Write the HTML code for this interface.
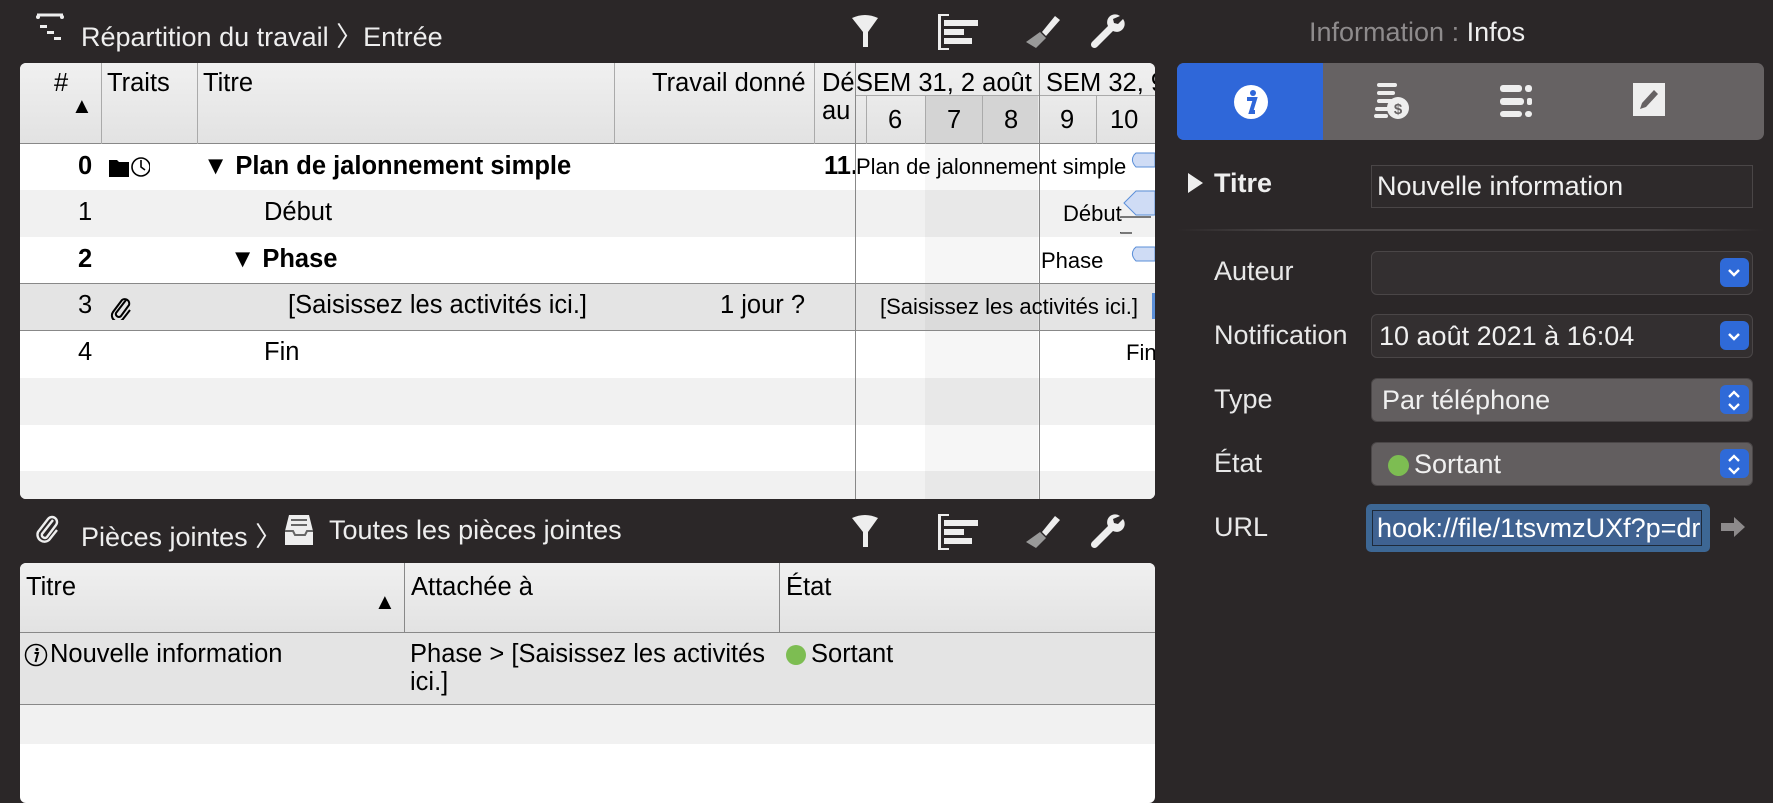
<!DOCTYPE html>
<html><head><meta charset="utf-8"><style>
*{box-sizing:border-box;margin:0;padding:0}
body{width:1773px;height:786px;background:#2b2728;font-family:"Liberation Sans",sans-serif;position:relative;overflow:hidden;color:#000}
.a{position:absolute}
.t{color:#eee;font-size:27px;white-space:nowrap}
.cell{position:absolute;font-size:25.5px;white-space:nowrap}
.g{font-size:22px}
.vl{position:absolute;width:1px;background:#aaa}
.hl{position:absolute;height:1px;background:#999}
.lbl{position:absolute;left:1214px;color:#e8e8e8;font-size:27px}
.pop{position:absolute;left:1371px;width:382px;border:1px solid #4a4647;border-radius:6px;color:#f0f0f0;font-size:27px;padding-left:10px}
.btn{position:absolute;right:3px;top:6px;width:29px;height:29px;background:#2f6ad8;border-radius:6px}
</style></head><body>

<!-- top title -->
<svg class="a" style="left:35px;top:12px" width="32" height="30" viewBox="0 0 32 30"><path d="M2 3h26" stroke="#eee" stroke-width="3"/><circle cx="3" cy="5" r="2" fill="#eee"/><circle cx="27" cy="5" r="2" fill="#eee"/><rect x="5" y="13" width="7" height="3" fill="#eee"/><rect x="12" y="19" width="7" height="3" fill="#eee"/><rect x="19" y="25" width="7" height="3" fill="#eee"/></svg>
<div class="a t" style="left:81px;top:15px">Répartition du travail 〉Entrée</div>

<!-- toolbar icons -->
<svg class="a" style="left:850px;top:12px" width="280" height="40" viewBox="0 0 280 40">
 <g fill="#eee">
  <path d="M2 6 Q15 0 28 6 L18 20 L18 35 L13 35 L13 20 Z"/>
  <path d="M88 2h3v36h-3zM91 2h8v2h-8zM91 36h8v2h-8z"/><rect x="94" y="8" width="34" height="6"/><rect x="94" y="17" width="20" height="6"/><rect x="94" y="26" width="28" height="6"/>
  <path d="M205 4 l5 4 -14 16 -4 -4z"/><path d="M190 20 l6 6 -10 10 -10 -6z" fill="#999"/>
  <path d="M270 4 a8 8 0 0 0 -12 10 l-16 16 a3 3 0 0 0 5 5 l16 -16 a8 8 0 0 0 10 -12 l-5 5 -4 -1 -1 -4z"/>
 </g>
</svg>

<!-- top table -->
<div class="a" style="left:20px;top:63px;width:1135px;height:436px;background:#fff;border-radius:6px;overflow:hidden">
 <div class="a" style="left:0;top:0;width:1135px;height:81px;background:linear-gradient(#f0f0f0,#e2e2e2)"></div>
 <div class="a" style="left:0;top:127px;width:1135px;height:47px;background:#f1f1f1"></div>
 <div class="a" style="left:0;top:221px;width:1135px;height:47px;background:#e4e4e4"></div>
 <div class="a" style="left:0;top:315px;width:1135px;height:47px;background:#f1f1f1"></div>
 <div class="a" style="left:0;top:408px;width:1135px;height:47px;background:#f1f1f1"></div>
 <div class="a" style="left:905px;top:81px;width:113px;height:355px;background:rgba(0,0,0,0.035)"></div>
 <div class="a" style="left:905px;top:32px;width:113px;height:49px;background:#d4d4d4"></div>
 <div class="hl" style="left:0;top:80px;width:1135px;background:#888"></div>
 <div class="hl" style="left:835px;top:32px;width:300px;background:#aaa"></div>
 <div class="hl" style="left:0;top:220px;width:1135px;background:#888"></div>
 <div class="hl" style="left:0;top:267px;width:1135px;background:#888"></div>
 <div class="vl" style="left:81px;top:0;height:81px"></div>
 <div class="vl" style="left:177px;top:0;height:81px"></div>
 <div class="vl" style="left:594px;top:0;height:81px"></div>
 <div class="vl" style="left:794px;top:0;height:81px"></div>
 <div class="vl" style="left:835px;top:0;height:436px;background:#888"></div>
 <div class="vl" style="left:846px;top:32px;height:49px"></div>
 <div class="vl" style="left:905px;top:32px;height:49px"></div>
 <div class="vl" style="left:962px;top:32px;height:49px"></div>
 <div class="vl" style="left:1019px;top:0;height:436px;background:#888"></div>
 <div class="vl" style="left:1076px;top:32px;height:49px"></div>
 <div class="cell" style="left:34px;top:6px">#</div>
 <div class="cell" style="left:51px;top:30px;font-size:22px">▲</div>
 <div class="cell" style="left:87px;top:6px">Traits</div>
 <div class="cell" style="left:183px;top:6px">Titre</div>
 <div class="cell" style="left:632px;top:6px">Travail donné</div>
 <div class="cell" style="left:802px;top:6px;width:33px;overflow:hidden">Dé</div>
 <div class="cell" style="left:802px;top:34px">au</div>
 <div class="cell" style="left:836px;top:6px">SEM 31, 2 août</div>
 <div class="cell" style="left:1026px;top:6px">SEM 32, 9</div>
 <div class="cell" style="left:868px;top:43px">6</div>
 <div class="cell" style="left:927px;top:43px">7</div>
 <div class="cell" style="left:984px;top:43px">8</div>
 <div class="cell" style="left:1040px;top:43px">9</div>
 <div class="cell" style="left:1090px;top:43px">10</div>

 <div class="cell" style="left:58px;top:89px;font-weight:bold">0</div>
 <svg class="a" style="left:88px;top:92px" width="42" height="24"><path d="M1 5h8l2 2h10v15H1z" fill="#000"/><circle cx="33" cy="12" r="9" fill="none" stroke="#000" stroke-width="1.6"/><path d="M33 5v7l4 3" stroke="#000" stroke-width="1.6" fill="none"/></svg>
 <div class="cell" style="left:183px;top:89px;font-weight:bold">▼ Plan de jalonnement simple</div>
 <div class="cell" style="left:804px;top:89px;font-weight:bold;width:31px;overflow:hidden">11.0</div>
 <div class="cell g" style="left:836px;top:91px">Plan de jalonnement simple</div>
 <div class="cell" style="left:58px;top:135px">1</div>
 <div class="cell" style="left:244px;top:135px">Début</div>
 <div class="cell g" style="left:1043px;top:138px">Début</div>
 <div class="cell" style="left:58px;top:182px;font-weight:bold">2</div>
 <div class="cell" style="left:210px;top:182px;font-weight:bold">▼ Phase</div>
 <div class="cell g" style="left:1021px;top:185px">Phase</div>
 <div class="cell" style="left:58px;top:228px">3</div>
 <svg class="a" style="left:90px;top:233px" width="22" height="24"><path d="M16 4 L6 17 a3 3 0 0 0 5 3 L19 9 a4.5 4.5 0 0 0 -7 -5 L3 16 a6 6 0 0 0 10 7 L20 14" stroke="#000" stroke-width="2" fill="none"/></svg>
 <div class="cell" style="left:268px;top:228px">[Saisissez les activités ici.]</div>
 <div class="cell" style="left:700px;top:228px">1 jour ?</div>
 <div class="cell g" style="left:860px;top:231px">[Saisissez les activités ici.]</div>
 <div class="cell" style="left:58px;top:275px">4</div>
 <div class="cell" style="left:244px;top:275px">Fin</div>
 <div class="cell g" style="left:1106px;top:277px">Fin</div>
 <svg class="a" style="left:1100px;top:84px" width="35" height="140"><path d="M14 8 q-4 6 2 12 l19 0 0-14 -19 0z" fill="#cfdcf5" stroke="#5b8fd8"/><path d="M4 56 l12 -12 19 0 0 24 -19 0z" fill="#cfdcf5" stroke="#5b8fd8"/><path d="M-2 74 q0 -4 3 -4 h30 M-2 74 v8 q0 4 4 4 h10" stroke="#000" fill="none"/><path d="M14 102 q-4 6 2 12 l19 0 0-14 -19 0z" fill="#cfdcf5" stroke="#5b8fd8"/><path d="M18 226 v20" stroke="#5b8fd8" stroke-width="4"/></svg>
 <div class="a" style="left:1132px;top:230px;width:3px;height:26px;background:#5b8fd8"></div>
</div>

<!-- bottom title -->
<svg class="a" style="left:35px;top:514px" width="26" height="30"><path d="M18 6 L7 20 a3 3 0 0 0 5 3 L21 11 a5 5 0 0 0 -8 -6 L3 18 a7 7 0 0 0 11 8 L22 16" stroke="#eee" stroke-width="2.4" fill="none"/></svg>
<div class="a t" style="left:81px;top:515px">Pièces jointes 〉</div>
<svg class="a" style="left:283px;top:513px" width="34" height="34"><path d="M6 2h20l4 16v14H2V18z" fill="#eee"/><rect x="8" y="6" width="16" height="2" fill="#666"/><rect x="8" y="11" width="16" height="2" fill="#666"/><path d="M2 18h8l2 4h10l2-4h6" stroke="#666" fill="none" stroke-width="2"/></svg>
<div class="a t" style="left:329px;top:515px">Toutes les pièces jointes</div>
<svg class="a" style="left:850px;top:512px" width="280" height="40" viewBox="0 0 280 40">
 <g fill="#eee">
  <path d="M2 6 Q15 0 28 6 L18 20 L18 35 L13 35 L13 20 Z"/>
  <path d="M88 2h3v36h-3zM91 2h8v2h-8zM91 36h8v2h-8z"/><rect x="94" y="8" width="34" height="6"/><rect x="94" y="17" width="20" height="6"/><rect x="94" y="26" width="28" height="6"/>
  <path d="M205 4 l5 4 -14 16 -4 -4z"/><path d="M190 20 l6 6 -10 10 -10 -6z" fill="#999"/>
  <path d="M270 4 a8 8 0 0 0 -12 10 l-16 16 a3 3 0 0 0 5 5 l16 -16 a8 8 0 0 0 10 -12 l-5 5 -4 -1 -1 -4z"/>
 </g>
</svg>

<!-- bottom table -->
<div class="a" style="left:20px;top:563px;width:1135px;height:240px;background:#fff;border-radius:6px;overflow:hidden">
 <div class="a" style="left:0;top:0;width:1135px;height:70px;background:linear-gradient(#f0f0f0,#e2e2e2)"></div>
 <div class="a" style="left:0;top:70px;width:1135px;height:72px;background:#e4e4e4"></div>
 <div class="a" style="left:0;top:142px;width:1135px;height:39px;background:#f1f1f1"></div>
 <div class="hl" style="left:0;top:69px;width:1135px;background:#888"></div>
 <div class="hl" style="left:0;top:141px;width:1135px;background:#888"></div>
 <div class="vl" style="left:384px;top:0;height:70px;background:#888"></div>
 <div class="vl" style="left:759px;top:0;height:70px;background:#888"></div>
 <div class="cell" style="left:6px;top:10px">Titre</div>
 <div class="cell" style="left:354px;top:26px;font-size:22px">▲</div>
 <div class="cell" style="left:391px;top:10px">Attachée à</div>
 <div class="cell" style="left:766px;top:10px">État</div>
 <svg class="a" style="left:4px;top:80px" width="24" height="24"><circle cx="12" cy="12" r="10.5" fill="none" stroke="#000" stroke-width="1.5"/><circle cx="13" cy="6.5" r="1.6"/><path d="M10.5 10h3.5l-2.5 9" stroke="#000" stroke-width="2" fill="none"/></svg>
 <div class="cell" style="left:30px;top:77px">Nouvelle information</div>
 <div class="cell" style="left:390px;top:77px">Phase &gt; [Saisissez les activités</div>
 <div class="cell" style="left:390px;top:105px">ici.]</div>
 <div class="a" style="left:766px;top:82px;width:20px;height:20px;border-radius:50%;background:#7dbd52"></div>
 <div class="cell" style="left:791px;top:77px">Sortant</div>
</div>

<!-- right panel -->
<div class="a" style="left:1309px;top:17px;font-size:27px;color:#8e8b8c;white-space:nowrap">Information : <span style="color:#eee">Infos</span></div>
<div class="a" style="left:1177px;top:63px;width:587px;height:77px;background:#666263;border-radius:7px;overflow:hidden">
 <div class="a" style="left:0;top:0;width:146px;height:77px;background:#2f67d9"></div>
 <svg class="a" style="left:56px;top:21px" width="36" height="36"><circle cx="18" cy="18" r="17" fill="#fff"/><circle cx="20" cy="9" r="3" fill="#2f67d9"/><path d="M14 15h8l-4 13h4" stroke="#2f67d9" stroke-width="4" fill="none"/></svg>
 <svg class="a" style="left:197px;top:20px" width="40" height="40"><g fill="#eee"><rect x="3" y="0" width="20" height="4" rx="2"/><rect x="3" y="8" width="18" height="4" rx="2"/><rect x="3" y="16" width="16" height="4" rx="2"/><rect x="1" y="24" width="14" height="4" rx="2"/><rect x="0" y="31" width="14" height="4" rx="2"/><circle cx="24" cy="25" r="11"/></g><text x="24" y="31" font-size="15" font-weight="bold" text-anchor="middle" fill="#666263" font-family="Liberation Sans">$</text></svg>
 <svg class="a" style="left:323px;top:22px" width="32" height="32"><g fill="#eee"><rect x="0" y="0" width="22" height="7" rx="3"/><rect x="25" y="0" width="7" height="7" rx="3"/><rect x="0" y="13" width="24" height="7" rx="3"/><rect x="27" y="13" width="5" height="7" rx="2"/><rect x="0" y="26" width="22" height="6" rx="3"/><rect x="25" y="26" width="7" height="6" rx="3"/></g></svg>
 <svg class="a" style="left:456px;top:20px" width="32" height="33"><rect width="32" height="33" fill="#eee"/><path d="M7 26 l2-6 12-13 4 4-12 13z" fill="#666263"/></svg>
</div>
<div class="a" style="left:1188px;top:173px;width:0;height:0;border-top:10px solid transparent;border-bottom:10px solid transparent;border-left:15px solid #eee"></div>
<div class="lbl" style="top:168px;font-weight:bold;color:#eee">Titre</div>
<div class="a" style="left:1371px;top:165px;width:382px;height:43px;background:#2e2a2b;border:1px solid #4a4647;color:#f0f0f0;font-size:27px;padding:5px 5px;white-space:nowrap">Nouvelle information</div>
<div class="a" style="left:1177px;top:229px;width:587px;height:2px;background:linear-gradient(90deg,#2b2728,#4c4849 20%,#4c4849 80%,#2b2728)"></div>

<div class="lbl" style="top:256px">Auteur</div>
<div class="pop" style="top:251px;height:44px;background:#332f30"><div class="btn"><svg width="29" height="29"><path d="M9 12l5 5 5-5" stroke="#fff" stroke-width="2.5" fill="none"/></svg></div></div>
<div class="lbl" style="top:320px">Notification</div>
<div class="pop" style="top:314px;height:44px;background:#332f30;line-height:42px;padding-left:7px;white-space:nowrap">10 août 2021 à 16:04<div class="btn"><svg width="29" height="29"><path d="M9 12l5 5 5-5" stroke="#fff" stroke-width="2.5" fill="none"/></svg></div></div>
<div class="lbl" style="top:384px">Type</div>
<div class="pop" style="top:378px;height:44px;background:#625e5f;line-height:42px">Par téléphone<div class="btn"><svg width="29" height="29"><path d="M9 11l5-5 5 5M9 18l5 5 5-5" stroke="#fff" stroke-width="2.3" fill="none"/></svg></div></div>
<div class="lbl" style="top:448px">État</div>
<div class="pop" style="top:442px;height:44px;background:#625e5f;line-height:42px;padding-left:16px"><span style="display:inline-block;width:21px;height:21px;border-radius:50%;background:#7dbd52;vertical-align:-3px;margin-right:5px"></span>Sortant<div class="btn"><svg width="29" height="29"><path d="M9 11l5-5 5 5M9 18l5 5 5-5" stroke="#fff" stroke-width="2.3" fill="none"/></svg></div></div>
<div class="lbl" style="top:512px">URL</div>
<div class="a" style="left:1366px;top:504px;width:344px;height:48px;background:#3d6794;border-radius:5px;padding:6px"><div style="background:#3f6291;border:1px solid #1e2a3a;height:36px;overflow:hidden;color:#fff;font-size:27px;line-height:34px;padding-left:4px;white-space:nowrap;width:330px">hook://file/1tsvmzUXf?p=dr</div></div>
<svg class="a" style="left:1720px;top:515px" width="26" height="24"><path d="M1 8h13V2l11 10-11 10v-6H1z" fill="#8d8a8b"/></svg>
</body></html>
